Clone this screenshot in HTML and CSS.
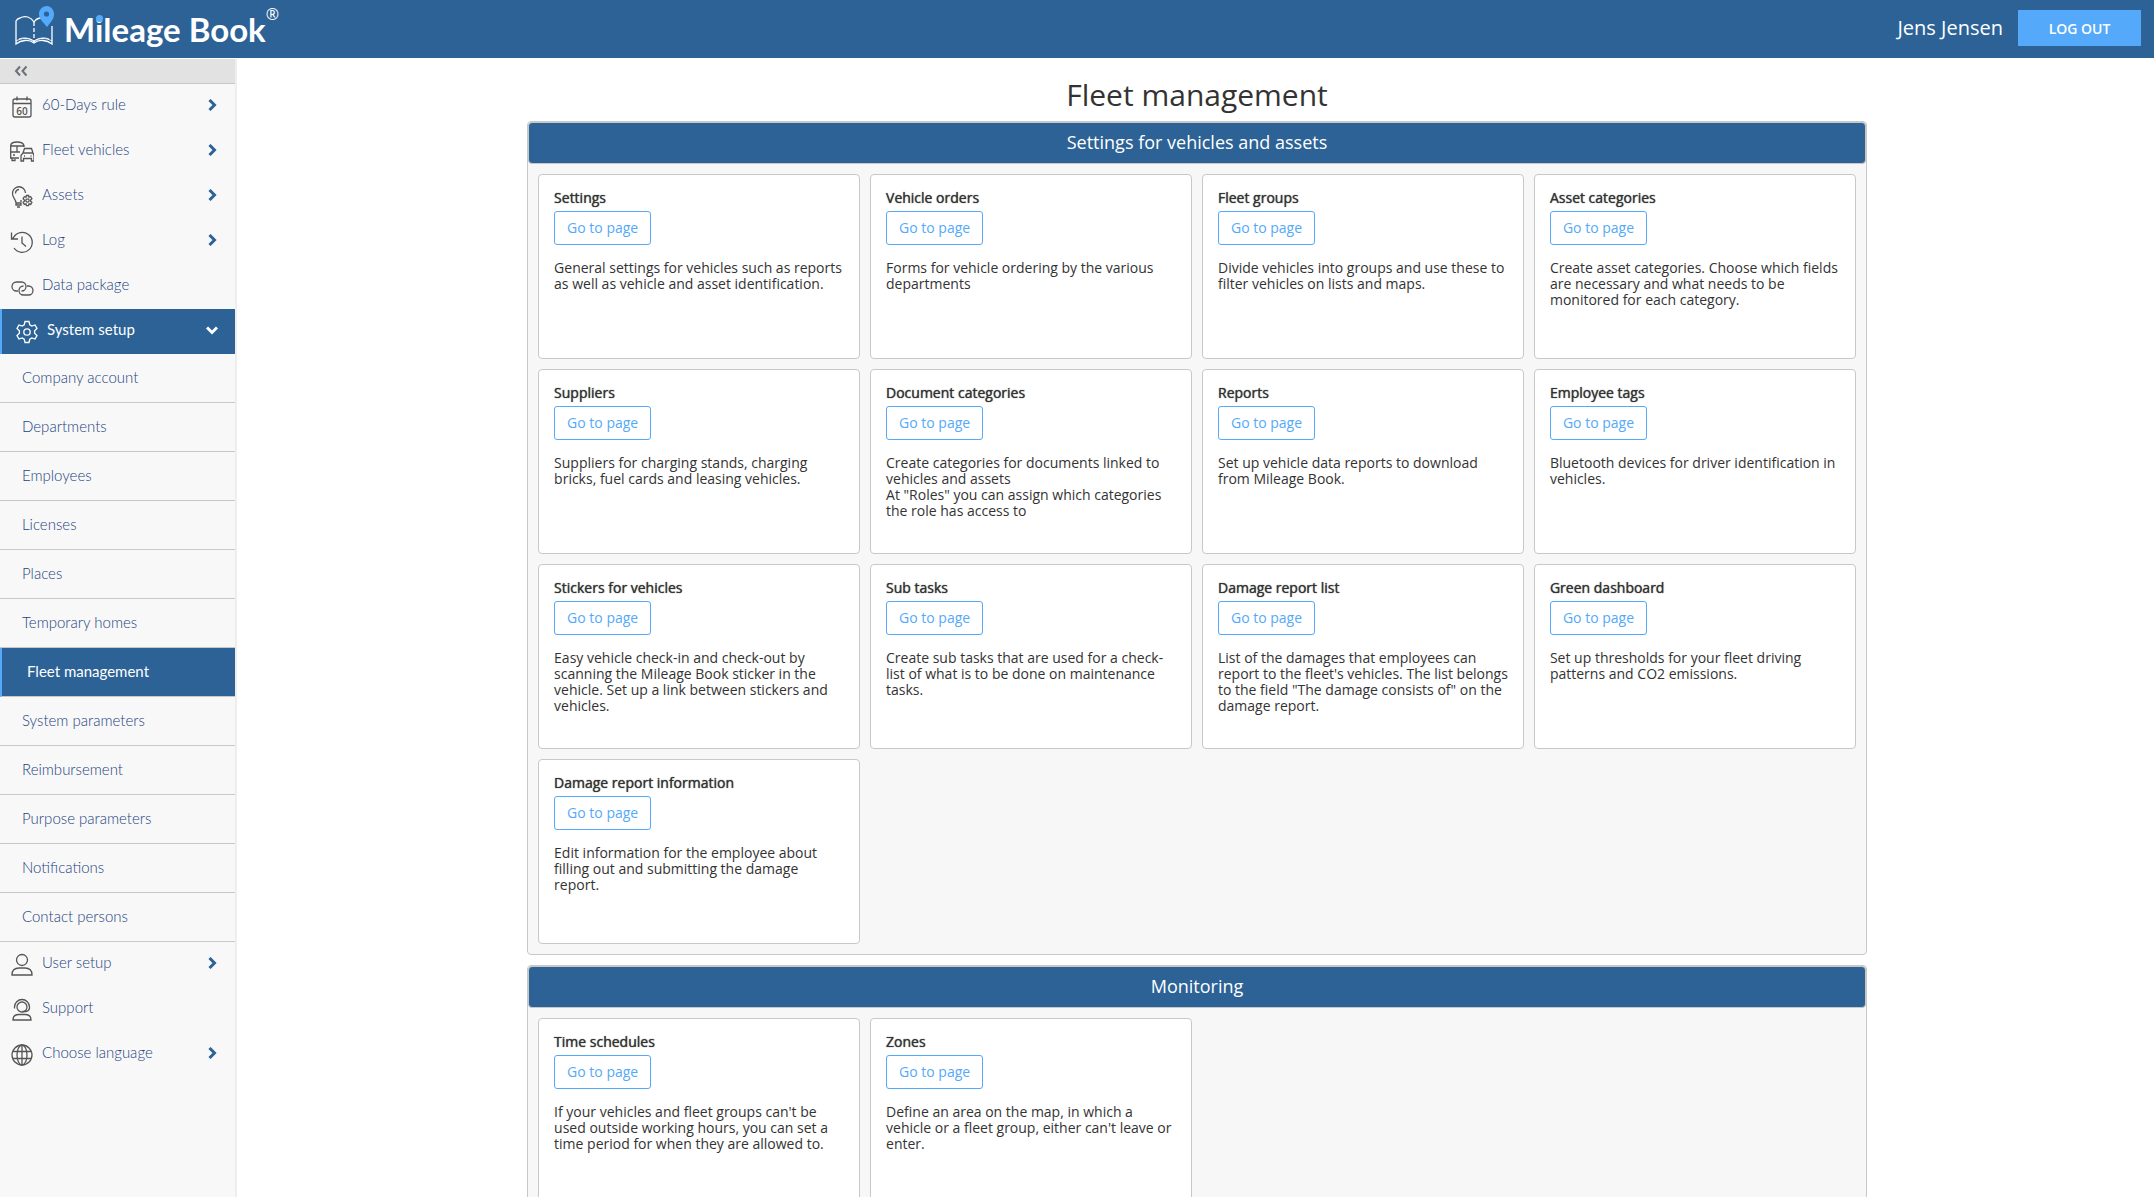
FILE: index.html
```
<!DOCTYPE html>
<html lang="en">
<head>
  <meta charset="UTF-8">
  <meta name="viewport" content="width=device-width, initial-scale=1.0">
  <title>Fleet management - Mileage Book</title>
  <link rel="stylesheet" href="styles.css">
</head>
<body>
  <header class="topbar">
    <a href="#" class="logo">
      <svg width="42" height="42" viewBox="0 0 42 42" fill="none" stroke="#fff" stroke-width="1.3">
        <path d="M26 13c-3 0-5 1-7 4-3-5-9-7-14-4-2 .5-3 1-4 3v23c5-4 13-5 18-1 5-4 13-3 18 1V21"/>
        <path d="M1 36c5-3 13-4 18 1 5-5 13-4 18-1M4 34c5-2 11-1 15 2 4-3 10-4 15-2"  stroke-width=".9"/>
        <path d="M19 17v20" stroke-dasharray="4 2"/>
        <path d="M32 1c-5 0-8 4-8 8 0 5 4 8 8 13 4-5 7-8 7-13 0-4-3-8-7-8z" fill="#54a9fa" stroke="none"/>
        <circle cx="31.500" cy="9" r="2.600" fill="#2c6296" stroke="none"/>
      </svg>
      <span class="logo-text">M<span class="logo-i">i</span>leage Book</span>
      <span class="logo-mark">®</span>
    </a>
    <div class="user">
      <span class="user-name">Jens Jensen</span>
      <button type="button" class="logout">LOG OUT</button>
    </div>
  </header>

  <div class="layout">
    <nav class="sidebar">
      <button type="button" class="collapse" aria-label="Collapse menu">
        <svg width="14" height="12" viewBox="0 0 14 12" fill="none" stroke="#6b7177" stroke-width="2"><path d="M6 1.500L2 6l4 4.500M12.500 1.500L8.500 6l4 4.500"/></svg>
      </button>

      <a href="#" class="item">
        <svg class="icon" viewBox="0 0 24 24"><rect x="3" y="4" width="18" height="18" rx="2"/><path d="M3 8.500h18M7 1.500v4M17 1.500v4"/><text x="12" y="19.500">60</text></svg>
        <span>60-Days rule</span>
        <svg class="arrow" viewBox="0 0 12 12"><path d="M3.500 1l5 5-5 5"/></svg>
      </a>
      <a href="#" class="item">
        <svg class="icon" viewBox="0 0 24 24"><path d="M5 19v1.500H2V18H.700V5.500Q1 2 7 2t7 3.500V7M.700 6H14M.700 12H10M7 6v6M3 15h2M2 18h7M13 13l1.500-4.500h7L23 13l1 2.500V21h-2.500v-2.500h-8V21H11v-5.500zh10M14 16h1M20.500 16h1"/></svg>
        <span>Fleet vehicles</span>
        <svg class="arrow" viewBox="0 0 12 12"><path d="M3.500 1l5 5-5 5"/></svg>
      </a>
      <a href="#" class="item">
        <svg class="icon" viewBox="0 0 24 24"><path d="M6 18c0-4-3.500-5-3.500-9.500a6.500 6.500 0 0 1 13-.5M6 18h5v2H6zM7 22h3M5.500 8.500a4 4 0 0 1 3.500-4M11 17v-2"/><circle cx="17.500" cy="15.500" r="1.700"/><path d="M16.400 10.500h2.200l.4 1.700 1.700-.5 1.200 2-1.300 1.300v1.200l1.300 1.200-1.200 2-1.700-.5-.4 1.700h-2.200l-.4-1.700-1.700.5-1.200-2 1.300-1.200V15l-1.300-1.300 1.200-2 1.700.5z"/></svg>
        <span>Assets</span>
        <svg class="arrow" viewBox="0 0 12 12"><path d="M3.500 1l5 5-5 5"/></svg>
      </a>
      <a href="#" class="item">
        <svg class="icon" viewBox="0 0 24 24"><path d="M4 18A10 10 0 1 0 3.500 7.500L2 9M1.500 2.500V9H8M12 6.500V13l4 3.500"/></svg>
        <span>Log</span>
        <svg class="arrow" viewBox="0 0 12 12"><path d="M3.500 1l5 5-5 5"/></svg>
      </a>
      <a href="#" class="item">
        <svg class="icon" viewBox="0 0 24 24"><path d="M8 16H6.500a4.500 4.500 0 0 1 0-9h5a4.500 4.500 0 0 1 0 9M17 11h1.500a4.500 4.500 0 0 1 0 9h-5a4.500 4.500 0 0 1 0-9"/></svg>
        <span>Data package</span>
      </a>
      <a href="#" class="item active">
        <svg class="icon" viewBox="0 0 24 24"><circle cx="12" cy="12" r="3.200"/><path d="M10 1.500h4l.8 3.300 2 1.200 3.200-1 2 3.500-2.400 2.300v2.400l2.400 2.300-2 3.500-3.200-1-2 1.200-.8 3.300h-4l-.8-3.300-2-1.200-3.200 1-2-3.500 2.400-2.300v-2.400L2 8.500 4 5l3.200 1 2-1.200z"/></svg>
        <span>System setup</span>
        <svg class="arrow" viewBox="0 0 12 12"><path d="M1 3.500l5 5 5-5"/></svg>
      </a>

      <div class="submenu">
        <a href="#">Company account</a>
        <a href="#">Departments</a>
        <a href="#">Employees</a>
        <a href="#">Licenses</a>
        <a href="#">Places</a>
        <a href="#">Temporary homes</a>
        <a href="#" class="active">Fleet management</a>
        <a href="#">System parameters</a>
        <a href="#">Reimbursement</a>
        <a href="#">Purpose parameters</a>
        <a href="#">Notifications</a>
        <a href="#">Contact persons</a>
      </div>

      <a href="#" class="item">
        <svg class="icon" viewBox="0 0 24 24"><circle cx="12" cy="7" r="5.500"/><path d="M2 22q0-7 7-7h6q7 0 7 7z"/></svg>
        <span>User setup</span>
        <svg class="arrow" viewBox="0 0 12 12"><path d="M3.500 1l5 5-5 5"/></svg>
      </a>
      <a href="#" class="item">
        <svg class="icon" viewBox="0 0 24 24"><circle cx="12" cy="9" r="5"/><path d="M4.500 10.500V9a7.500 7.500 0 0 1 15 0v1.500q-1 3-4 3h-3M3 22q0-5.500 6-5.500h6q6 0 6 5.500z"/></svg>
        <span>Support</span>
      </a>
      <a href="#" class="item">
        <svg class="icon" viewBox="0 0 24 24"><circle cx="12" cy="12" r="10"/><ellipse cx="12" cy="12" rx="5" ry="10"/><path d="M12 2v20M3 8.500h18M3 15.500h18"/></svg>
        <span>Choose language</span>
        <svg class="arrow" viewBox="0 0 12 12"><path d="M3.500 1l5 5-5 5"/></svg>
      </a>
    </nav>

    <main class="content">
      <h1>Fleet management</h1>

      <section class="panel">
        <h2>Settings for vehicles and assets</h2>
        <div class="cards">
          <div class="card">
            <h3>Settings</h3>
            <button type="button" class="btn">Go to page</button>
            <p>General settings for vehicles such as reports as well as vehicle and asset identification.</p>
          </div>
          <div class="card">
            <h3>Vehicle orders</h3>
            <button type="button" class="btn">Go to page</button>
            <p>Forms for vehicle ordering by the various departments</p>
          </div>
          <div class="card">
            <h3>Fleet groups</h3>
            <button type="button" class="btn">Go to page</button>
            <p>Divide vehicles into groups and use these to filter vehicles on lists and maps.</p>
          </div>
          <div class="card">
            <h3>Asset categories</h3>
            <button type="button" class="btn">Go to page</button>
            <p>Create asset categories. Choose which fields are necessary and what needs to be monitored for each category.</p>
          </div>
          <div class="card">
            <h3>Suppliers</h3>
            <button type="button" class="btn">Go to page</button>
            <p>Suppliers for charging stands, charging bricks, fuel cards and leasing vehicles.</p>
          </div>
          <div class="card">
            <h3>Document categories</h3>
            <button type="button" class="btn">Go to page</button>
            <p>Create categories for documents linked to vehicles and assets<br>At "Roles" you can assign which categories the role has access to</p>
          </div>
          <div class="card">
            <h3>Reports</h3>
            <button type="button" class="btn">Go to page</button>
            <p>Set up vehicle data reports to download from Mileage Book.</p>
          </div>
          <div class="card">
            <h3>Employee tags</h3>
            <button type="button" class="btn">Go to page</button>
            <p>Bluetooth devices for driver identification in vehicles.</p>
          </div>
          <div class="card">
            <h3>Stickers for vehicles</h3>
            <button type="button" class="btn">Go to page</button>
            <p>Easy vehicle check-in and check-out by scanning the Mileage Book sticker in the vehicle. Set up a link between stickers and vehicles.</p>
          </div>
          <div class="card">
            <h3>Sub tasks</h3>
            <button type="button" class="btn">Go to page</button>
            <p>Create sub tasks that are used for a check-list of what is to be done on maintenance tasks.</p>
          </div>
          <div class="card">
            <h3>Damage report list</h3>
            <button type="button" class="btn">Go to page</button>
            <p>List of the damages that employees can report to the fleet's vehicles. The list belongs to the field "The damage consists of" on the damage report.</p>
          </div>
          <div class="card">
            <h3>Green dashboard</h3>
            <button type="button" class="btn">Go to page</button>
            <p>Set up thresholds for your fleet driving patterns and CO2 emissions.</p>
          </div>
          <div class="card">
            <h3>Damage report information</h3>
            <button type="button" class="btn">Go to page</button>
            <p>Edit information for the employee about filling out and submitting the damage report.</p>
          </div>
        </div>
      </section>

      <section class="panel">
        <h2>Monitoring</h2>
        <div class="cards">
          <div class="card">
            <h3>Time schedules</h3>
            <button type="button" class="btn">Go to page</button>
            <p>If your vehicles and fleet groups can't be used outside working hours, you can set a time period for when they are allowed to.</p>
          </div>
          <div class="card">
            <h3>Zones</h3>
            <button type="button" class="btn">Go to page</button>
            <p>Define an area on the map, in which a vehicle or a fleet group, either can't leave or enter.</p>
          </div>
        </div>
      </section>
    </main>
  </div>
</body>
</html>
```
FILE: styles.css
```
* { box-sizing: border-box; }
body { margin: 0; height: 100vh; display: flex; flex-direction: column; font-family: "Open Sans", sans-serif; font-size: 14px; color: #333; background: #fff; }
a { text-decoration: none; }
button { font-family: inherit; cursor: pointer; }

/* top bar */
.topbar { flex: none; height: 58px; margin-bottom: 1px; padding: 0 13px 0 15px; display: flex; align-items: center; justify-content: space-between; background: #2c6296; color: #fff; }
.logo { display: flex; align-items: center; color: #fff; height: 58px; }
.logo svg { margin-bottom: 6px; }
.logo-text { margin-left: 7px; font-family: Lato, sans-serif; font-size: 33px; font-weight: bold; line-height: 58px; }
.logo-i { position: relative; }
.logo-i::after { content: ""; position: absolute; left: 1px; top: 6px; width: 7px; height: 7px; border-radius: 50%; background: #54a9fa; }
.logo-mark { align-self: flex-start; font-size: 16px; line-height: 28px; }
.user { display: flex; align-items: center; gap: 15px; padding-bottom: 2px; }
.user-name { font-size: 20px; line-height: 28px; }
.logout { width: 123px; height: 36px; border: none; background: #54a9fa; color: #fff; font-size: 14px; font-weight: 600; }

.layout { flex: 1; min-height: 0; display: flex; }

/* side menu */
.sidebar { flex: none; width: 237px; margin-right: 3px; border-right: 2px solid #eee; background: #f8f8f8; font-family: Lato, sans-serif; font-size: 15px; font-weight: 300; overflow: hidden; }
.collapse { display: flex; align-items: center; width: 100%; height: 25px; padding: 0 14px; border: none; border-bottom: 1px solid #c8c8c8; background: #e2e2e2; }
.item { display: flex; align-items: center; height: 45px; padding: 0 17px 0 10px; color: #24437f; }
.item span { flex: 1; margin-left: 8px; padding-bottom: 6px; }
.icon { width: 24px; height: 24px; fill: none; stroke: #555; stroke-width: 1.3; }
.icon text { font-family: "Open Sans", sans-serif; font-size: 10px; font-weight: 600; text-anchor: middle; fill: #555; stroke: none; }
.arrow { width: 12px; height: 12px; margin-bottom: 4px; fill: none; stroke: #2c6296; stroke-width: 3; }
.item.active { padding-left: 13px; border-left: 2px solid #54a9fa; background: #2c6296; color: #fff; font-weight: 400; }
.active .icon, .active .arrow { stroke: #fff; }
.submenu a { display: block; height: 49px; padding-left: 22px; border-bottom: 1px solid #c8c8c8; color: #24437f; line-height: 46px; }
.submenu .active { padding-left: 25px; border-left: 2px solid #54a9fa; background: #2c6296; color: #fff; font-weight: 400; }

/* page content */
.content { flex: 1; overflow-y: auto; scrollbar-width: none; }
h1 { margin: 0; padding: 12px 0 2px; font-size: 30px; font-weight: 400; line-height: 48px; text-align: center; }
.panel { width: 70%; margin: 0 auto 10px; border: 1px solid #c8c8c8; border-radius: 4px; background: #f7f7f7; }
.panel h2 { margin: 0; padding-bottom: 2px; border: 1px solid #c8c8c8; border-radius: 4px; background: #2c6296; color: #fff; font-size: 18px; font-weight: 400; line-height: 38px; text-align: center; }
.cards { display: grid; grid-template-columns: repeat(4, 1fr); gap: 10px; padding: 10px; }
.card { min-height: 185px; padding: 15px; border: 1px solid #c8c8c8; border-radius: 4px; background: #fff; }
.card h3 { margin: 0; font-size: 14px; font-weight: 400; line-height: 16px; padding-bottom: 5px; text-shadow: 0 0 1px #333; }
.card p { margin: 15px 0 0; line-height: 16px; }
.btn { display: block; height: 34px; padding: 0 12px 2px; border: 1px solid #54a9fa; border-radius: 3px; background: #fff; color: #54a9fa; font-size: 14px; }
```
